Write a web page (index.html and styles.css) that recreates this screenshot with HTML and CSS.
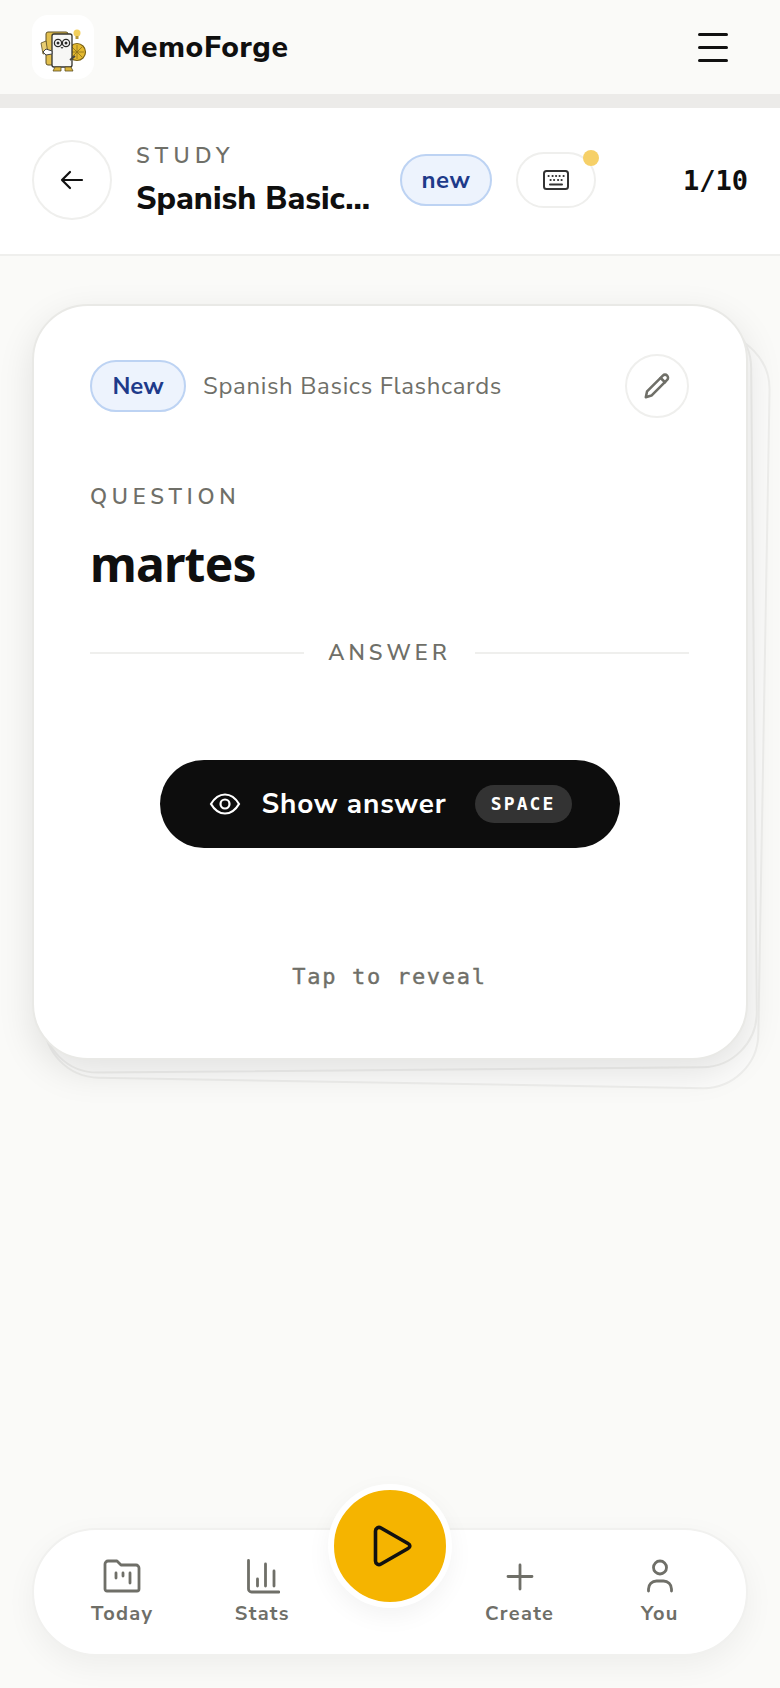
FILE: index.html
```html
<!DOCTYPE html>
<html lang="en">
<head>
    <meta charset="UTF-8">
    <meta name="viewport" content="width=device-width, initial-scale=1.0">
    <title>MemoForge</title>
    <link rel="stylesheet" href="styles.css">
</head>
<body>
    <div class="app">
        <header class="top-bar">
            <div class="brand">
                <div class="logo">
                    <svg width="62" height="64" viewBox="0 0 62 64">
                        <circle cx="45" cy="18" r="3.500" fill="#f3cf5b"/>
                        <rect x="43.500" y="21" width="3" height="3" fill="#b99a3a"/>
                        <rect x="14" y="17" width="22" height="33" rx="2" fill="#e2bf4e" stroke="#5c4f22" stroke-width="1"/>
                        <path d="M9 28l5 -2 2 12 -5 1z" fill="#e8cd72" stroke="#5c4f22" stroke-width="0.800"/>
                        <circle cx="45" cy="37" r="8.500" fill="#e4b92f" stroke="#7b6216" stroke-width="1.200"/>
                        <path d="M38 37h14M45 30v14M40 32l10 10M50 32l-10 10" stroke="#8a6f1c" stroke-width="0.800"/>
                        <rect x="20" y="19" width="20" height="33" rx="2" fill="#f7f7f5" stroke="#33332f" stroke-width="1.300"/>
                        <circle cx="26" cy="28" r="3.600" fill="#fff" stroke="#2a2a28" stroke-width="1.300"/>
                        <circle cx="34" cy="28" r="3.600" fill="#fff" stroke="#2a2a28" stroke-width="1.300"/>
                        <circle cx="26" cy="28" r="1.500" fill="#2a2a28"/>
                        <circle cx="34" cy="28" r="1.500" fill="#2a2a28"/>
                        <path d="M28.500 32l1.500 2 1.500 -2z" fill="#444"/>
                        <path d="M20 36l-6 -2 -3 3 3 3 6 -1z" fill="#fff" stroke="#444" stroke-width="1"/>
                        <path d="M38 45l5 -4" stroke="#444" stroke-width="1.800"/>
                        <path d="M23 52h6v4h-8zM33 52h6l2 4h-8z" fill="#dcb53c" stroke="#5c4f22" stroke-width="0.800"/>
                    </svg>
                </div>
                <span class="brand-name">MemoForge</span>
            </div>
            <button class="menu-btn" aria-label="Menu">
                <span></span><span></span><span></span>
            </button>
        </header>

        <section class="study-bar">
            <button class="back-btn" aria-label="Back">
                <svg width="28" height="28" viewBox="0 0 28 28" fill="none" stroke="#111" stroke-width="2.200" stroke-linecap="round" stroke-linejoin="round">
                    <path d="M24 14H4M12 6l-8 8 8 8"/>
                </svg>
            </button>
            <div class="study-title">
                <div class="study-label">STUDY</div>
                <div class="study-name">Spanish Basic...</div>
            </div>
            <span class="badge badge-small">new</span>
            <button class="keys-btn" aria-label="Shortcuts">
                <svg width="28" height="24" viewBox="0 0 28 24" fill="none" stroke="#333" stroke-width="2" stroke-linecap="round">
                    <rect x="2" y="3" width="24" height="18" rx="2.500"/>
                    <path d="M6.500 8h.2M10.500 8h.2M14 8h.2M17.500 8h.2M21.500 8h.2M8.500 12h.2M12 12h.2M16 12h.2M19.500 12h.2M8 16.500h12"/>
                </svg>
                <span class="keys-dot"></span>
            </button>
            <span class="counter">1/10</span>
        </section>

        <main class="stage">
            <div class="card-stack">
                <div class="ghost ghost-back"></div>
                <div class="ghost ghost-mid"></div>
                <article class="card">
                    <div class="card-head">
                        <span class="badge">New</span>
                        <span class="deck-name">Spanish Basics Flashcards</span>
                        <button class="edit-btn" aria-label="Edit">
                            <svg width="32" height="32" viewBox="0 0 30 30" fill="none" stroke="#6f6f68" stroke-width="2.400" stroke-linejoin="round" stroke-linecap="round">
                                <path d="M4.500 25.500l1.200 -5.500L20.500 5.200a2.800 2.800 0 0 1 4 0a2.800 2.800 0 0 1 0 4L9.800 24z"/>
                                <path d="M18.500 7.500l4 4"/>
                            </svg>
                        </button>
                    </div>
                    <div class="question-label">QUESTION</div>
                    <h1 class="question">martes</h1>
                    <div class="divider"><span>ANSWER</span></div>
                    <button class="show-btn">
                        <svg width="32" height="24" viewBox="0 0 32 24" fill="none" stroke="#fff" stroke-width="2.200">
                            <path d="M2 12c3.500 -6 8 -9.500 14 -9.500S26.500 6 30 12c-3.500 6 -8 9.500 -14 9.500S5.500 18 2 12z"/>
                            <circle cx="16" cy="12" r="4.500"/>
                        </svg>
                        <span class="show-text">Show answer</span>
                        <span class="kbd">SPACE</span>
                    </button>
                    <div class="tap-hint">Tap to reveal</div>
                </article>
            </div>
        </main>

        <nav class="bottom-nav">
            <a class="nav-item">
                <svg width="40" height="36" viewBox="0 0 40 36" fill="none" stroke="#6f6f68" stroke-width="2.800" stroke-linecap="round" stroke-linejoin="round">
                    <path d="M3 6a3 3 0 0 1 3 -3h9l4 4h15a3 3 0 0 1 3 3v21a2 2 0 0 1 -2 2H5a2 2 0 0 1 -2 -2z"/>
                    <path d="M14 15v5M21 15v3M28 15v10"/>
                </svg>
                <span>Today</span>
            </a>
            <a class="nav-item">
                <svg width="36" height="36" viewBox="0 0 36 36" fill="none" stroke="#6f6f68" stroke-width="2.800" stroke-linecap="round" stroke-linejoin="round">
                    <path d="M4.500 2.500V31a3 3 0 0 0 3 3H35"/>
                    <path d="M13.500 21v7M21.500 6v22M30 13v15"/>
                </svg>
                <span>Stats</span>
            </a>
            <div class="nav-gap"></div>
            <a class="nav-item">
                <svg width="30" height="36" viewBox="0 0 30 36" fill="none" stroke="#6f6f68" stroke-width="2.800" stroke-linecap="round">
                    <path d="M15 7v24M3 18.500h24"/>
                </svg>
                <span>Create</span>
            </a>
            <a class="nav-item">
                <svg width="30" height="36" viewBox="0 0 30 36" fill="none" stroke="#6f6f68" stroke-width="2.800" stroke-linecap="round">
                    <circle cx="15" cy="9.500" r="6.500"/>
                    <path d="M3.500 33v-2a8 8 0 0 1 8 -8h7a8 8 0 0 1 8 8v2"/>
                </svg>
                <span>You</span>
            </a>
            <button class="play-btn" aria-label="Start">
                <svg width="40" height="44" viewBox="0 0 40 44" fill="none" stroke="#111" stroke-width="3.600" stroke-linejoin="round">
                    <path d="M3.500 7c0 -3 3 -4.500 5.500 -3L36 19.500c2.500 1.500 2.500 3.500 0 5L9 40c-2.500 1.500 -5.500 0 -5.500 -3z"/>
                </svg>
            </button>
        </nav>
    </div>
</body>
</html>
```

FILE: styles.css
```css
* {
    box-sizing: border-box;
}

body {
    margin: 0;
    background: #fafaf8;
    font-family: "Nunito Sans", Nunito, "Noto Sans", "Open Sans", sans-serif;
    color: #0f0f0f;
}

button {
    padding: 0;
    background: none;
    border: none;
    font-family: inherit;
    cursor: pointer;
}

.app {
    display: flex;
    flex-direction: column;
    position: relative;
    width: 780px;
    height: 1688px;
    overflow: hidden;
}

.top-bar {
    display: flex;
    align-items: center;
    justify-content: space-between;
    height: 108px;
    padding: 0 52px 0 32px;
    background: #fafaf8;
    border-bottom: 14px solid #ecebe9;
}

.brand {
    display: flex;
    align-items: center;
    gap: 20px;
}

.logo {
    display: flex;
    width: 62px;
    height: 64px;
    background: #fff;
    border-radius: 16px;
}

.brand-name {
    font-size: 30px;
    font-weight: 800;
    letter-spacing: 0.700px;
}

.menu-btn {
    display: flex;
    flex-direction: column;
    gap: 10px;
    width: 30px;
}

.menu-btn span {
    height: 3px;
    background: #111;
    border-radius: 2px;
}

.study-bar {
    display: flex;
    align-items: center;
    height: 148px;
    padding: 0 32px 2px;
    background: #fff;
    border-bottom: 2px solid #efefed;
}

.back-btn {
    display: flex;
    align-items: center;
    justify-content: center;
    flex: none;
    width: 80px;
    height: 80px;
    background: #fff;
    border: 2px solid #efefed;
    border-radius: 50%;
}

.study-title {
    width: 264px;
    margin-left: 24px;
}

.study-label {
    font-size: 22px;
    font-weight: 600;
    letter-spacing: 5.400px;
    color: #6f6f68;
}

.study-name {
    margin-top: 6px;
    font-size: 32px;
    font-weight: 800;
    white-space: nowrap;
}

.badge {
    display: flex;
    align-items: center;
    justify-content: center;
    flex: none;
    width: 96px;
    height: 52px;
    background: #edf3fd;
    border: 2px solid #bdd3f3;
    border-radius: 26px;
    font-size: 24px;
    font-weight: 700;
    color: #1e3a8a;
}

.badge-small {
    width: 92px;
    letter-spacing: 0.600px;
}

.keys-btn {
    display: flex;
    align-items: center;
    justify-content: center;
    position: relative;
    flex: none;
    width: 80px;
    height: 56px;
    margin-left: 24px;
    background: #fff;
    border: 2px solid #efefed;
    border-radius: 28px;
}

.keys-dot {
    position: absolute;
    top: -4px;
    right: -5px;
    width: 16px;
    height: 16px;
    background: #f6d068;
    border-radius: 50%;
}

.counter {
    margin-left: auto;
    font-family: "DejaVu Sans Mono", monospace;
    font-size: 27px;
    font-weight: 700;
}

.stage {
    flex: 1;
    padding: 48px 32px 0;
}

.card-stack {
    position: relative;
    width: 716px;
    height: 756px;
}

.ghost {
    position: absolute;
    inset: 0;
    background: #fbfbfa;
    border: 2px solid #eeeeec;
    border-radius: 56px;
}

.ghost-back {
    transform: translate(17px, 24px) rotate(1deg);
}

.ghost-mid {
    transform: translate(7px, 11px) rotate(-0.500deg);
}

.card {
    display: flex;
    flex-direction: column;
    position: relative;
    height: 100%;
    padding: 48px 57px 0 56px;
    background: #fff;
    border: 2px solid #e9e9e6;
    border-radius: 56px;
    box-shadow: 0 12px 36px rgba(0, 0, 0, 0.1);
}

.card-head {
    display: flex;
    align-items: center;
}

.deck-name {
    margin-left: 17px;
    font-size: 24px;
    letter-spacing: 0.650px;
    color: #6f6f68;
}

.edit-btn {
    display: flex;
    align-items: center;
    justify-content: center;
    width: 64px;
    height: 64px;
    margin-left: auto;
    border: 2px solid #efefed;
    border-radius: 50%;
}

.question-label {
    margin-top: 64px;
    font-size: 22px;
    font-weight: 600;
    letter-spacing: 4.800px;
    color: #6f6f68;
}

.question {
    margin: 18px 0 0;
    font-family: "Noto Sans", sans-serif;
    font-size: 48px;
    font-weight: 700;
    line-height: 68px;
    letter-spacing: -0.800px;
}

.divider {
    display: flex;
    align-items: center;
    gap: 24px;
    margin-top: 40px;
    font-size: 22px;
    font-weight: 600;
    letter-spacing: 4.100px;
    color: #6f6f68;
}

.divider::before,
.divider::after {
    content: "";
    flex: 1;
    height: 2px;
    background: #efefed;
}

.show-btn {
    display: flex;
    align-items: center;
    align-self: center;
    width: 460px;
    height: 88px;
    margin-top: 92px;
    padding: 0 48px 0 49px;
    background: #0d0d0d;
    border-radius: 44px;
    color: #fff;
}

.show-text {
    margin-left: 21px;
    font-size: 28px;
    font-weight: 700;
    letter-spacing: 0.800px;
}

.kbd {
    margin-left: auto;
    padding: 9px 16px;
    background: #333;
    border-radius: 19px;
    font-family: "DejaVu Sans Mono", monospace;
    font-size: 18px;
    font-weight: 700;
    letter-spacing: 2.100px;
    line-height: 20px;
}

.tap-hint {
    margin-top: 116px;
    font-family: "DejaVu Sans Mono", monospace;
    font-size: 22px;
    letter-spacing: 1.700px;
    text-align: center;
    color: #6f6f68;
    -webkit-text-stroke: 0.4px #6f6f68;
}

.bottom-nav {
    display: flex;
    align-items: center;
    position: absolute;
    left: 32px;
    top: 1528px;
    width: 716px;
    height: 128px;
    padding: 0 16px 0 18px;
    background: #fff;
    border: 2px solid #f1f1ef;
    border-radius: 64px;
    box-shadow: 0 10px 30px rgba(0, 0, 0, 0.05);
}

.nav-item {
    display: flex;
    flex: 1;
    flex-direction: column;
    align-items: center;
    gap: 6px;
    font-size: 20px;
    font-weight: 700;
    letter-spacing: 1.300px;
    line-height: 27px;
    color: #6f6f68;
}

.nav-gap {
    flex: none;
    width: 117px;
}

.play-btn {
    display: flex;
    align-items: center;
    justify-content: center;
    position: absolute;
    left: 294px;
    top: -46px;
    width: 124px;
    height: 124px;
    padding-left: 4px;
    background: #f5b400;
    border: 6px solid #fff;
    border-radius: 50%;
    box-shadow: 0 8px 24px rgba(0, 0, 0, 0.05);
}
```
